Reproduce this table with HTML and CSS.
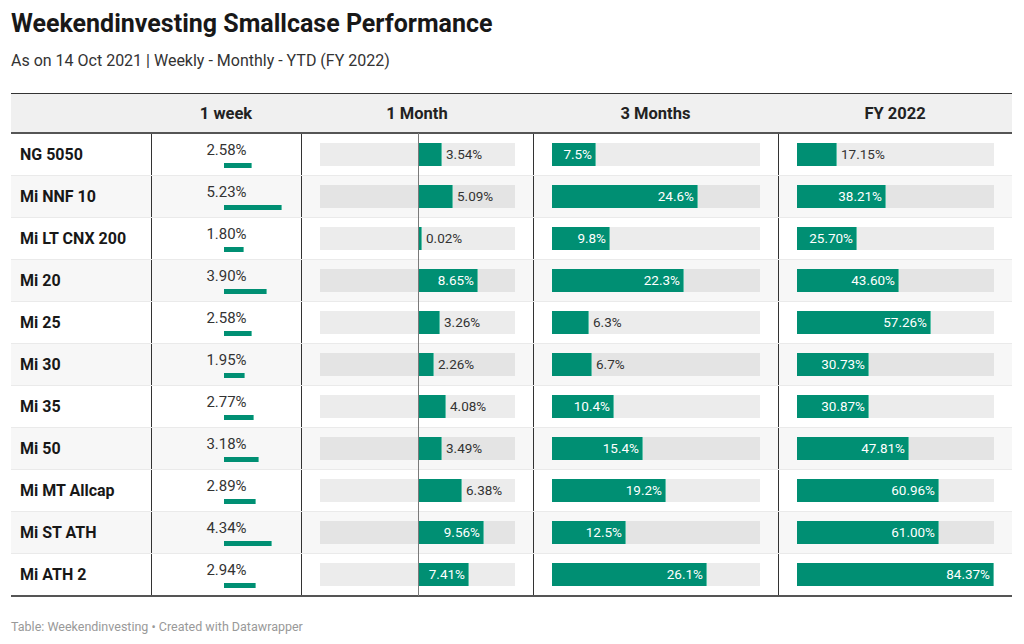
FILE: index.html
```html
<!DOCTYPE html>
<html>
<head>
<meta charset="utf-8">
<link rel="stylesheet" href="styles.css">
</head>
<body>
<div class="chart">
  <h1 class="title">Weekendinvesting Smallcase Performance</h1>
  <p class="subtitle">As on 14 Oct 2021 | Weekly - Monthly - YTD (FY 2022)</p>
  <div class="table">
    <div class="row head">
      <div class="cell"></div>
      <div class="cell">1 week</div>
      <div class="cell">1 Month</div>
      <div class="cell">3 Months</div>
      <div class="cell">FY 2022</div>
    </div>

    <div class="row">
      <div class="cell name">NG 5050</div>
      <div class="cell week"><span>2.58%</span><div class="wbar"><i style="width:28px"></i></div></div>
      <div class="cell month"><div class="track"><div class="neg"></div><div class="bar" style="width:24px"></div><span class="out">3.54%</span></div></div>
      <div class="cell col"><div class="track"><div class="bar" style="width:44px"><span>7.5%</span></div></div></div>
      <div class="cell col"><div class="track"><div class="bar" style="width:40px"></div><span class="out">17.15%</span></div></div>
    </div>

    <div class="row">
      <div class="cell name">Mi NNF 10</div>
      <div class="cell week"><span>5.23%</span><div class="wbar"><i style="width:58px"></i></div></div>
      <div class="cell month"><div class="track"><div class="neg"></div><div class="bar" style="width:35px"></div><span class="out">5.09%</span></div></div>
      <div class="cell col"><div class="track"><div class="bar" style="width:146px"><span>24.6%</span></div></div></div>
      <div class="cell col"><div class="track"><div class="bar" style="width:89px"><span>38.21%</span></div></div></div>
    </div>

    <div class="row">
      <div class="cell name">Mi LT CNX 200</div>
      <div class="cell week"><span>1.80%</span><div class="wbar"><i style="width:20px"></i></div></div>
      <div class="cell month"><div class="track"><div class="neg"></div><div class="bar" style="width:1px"></div><span class="out">0.02%</span></div></div>
      <div class="cell col"><div class="track"><div class="bar" style="width:58px"><span>9.8%</span></div></div></div>
      <div class="cell col"><div class="track"><div class="bar" style="width:60px"><span>25.70%</span></div></div></div>
    </div>

    <div class="row">
      <div class="cell name">Mi 20</div>
      <div class="cell week"><span>3.90%</span><div class="wbar"><i style="width:43px"></i></div></div>
      <div class="cell month"><div class="track"><div class="neg"></div><div class="bar" style="width:60px"><span>8.65%</span></div></div></div>
      <div class="cell col"><div class="track"><div class="bar" style="width:132px"><span>22.3%</span></div></div></div>
      <div class="cell col"><div class="track"><div class="bar" style="width:102px"><span>43.60%</span></div></div></div>
    </div>

    <div class="row">
      <div class="cell name">Mi 25</div>
      <div class="cell week"><span>2.58%</span><div class="wbar"><i style="width:28px"></i></div></div>
      <div class="cell month"><div class="track"><div class="neg"></div><div class="bar" style="width:22px"></div><span class="out">3.26%</span></div></div>
      <div class="cell col"><div class="track"><div class="bar" style="width:37px"></div><span class="out">6.3%</span></div></div>
      <div class="cell col"><div class="track"><div class="bar" style="width:134px"><span>57.26%</span></div></div></div>
    </div>

    <div class="row">
      <div class="cell name">Mi 30</div>
      <div class="cell week"><span>1.95%</span><div class="wbar"><i style="width:21px"></i></div></div>
      <div class="cell month"><div class="track"><div class="neg"></div><div class="bar" style="width:16px"></div><span class="out">2.26%</span></div></div>
      <div class="cell col"><div class="track"><div class="bar" style="width:40px"></div><span class="out">6.7%</span></div></div>
      <div class="cell col"><div class="track"><div class="bar" style="width:72px"><span>30.73%</span></div></div></div>
    </div>

    <div class="row">
      <div class="cell name">Mi 35</div>
      <div class="cell week"><span>2.77%</span><div class="wbar"><i style="width:30px"></i></div></div>
      <div class="cell month"><div class="track"><div class="neg"></div><div class="bar" style="width:28px"></div><span class="out">4.08%</span></div></div>
      <div class="cell col"><div class="track"><div class="bar" style="width:62px"><span>10.4%</span></div></div></div>
      <div class="cell col"><div class="track"><div class="bar" style="width:72px"><span>30.87%</span></div></div></div>
    </div>

    <div class="row">
      <div class="cell name">Mi 50</div>
      <div class="cell week"><span>3.18%</span><div class="wbar"><i style="width:35px"></i></div></div>
      <div class="cell month"><div class="track"><div class="neg"></div><div class="bar" style="width:24px"></div><span class="out">3.49%</span></div></div>
      <div class="cell col"><div class="track"><div class="bar" style="width:91px"><span>15.4%</span></div></div></div>
      <div class="cell col"><div class="track"><div class="bar" style="width:112px"><span>47.81%</span></div></div></div>
    </div>

    <div class="row">
      <div class="cell name">Mi MT Allcap</div>
      <div class="cell week"><span>2.89%</span><div class="wbar"><i style="width:32px"></i></div></div>
      <div class="cell month"><div class="track"><div class="neg"></div><div class="bar" style="width:44px"></div><span class="out">6.38%</span></div></div>
      <div class="cell col"><div class="track"><div class="bar" style="width:114px"><span>19.2%</span></div></div></div>
      <div class="cell col"><div class="track"><div class="bar" style="width:142px"><span>60.96%</span></div></div></div>
    </div>

    <div class="row">
      <div class="cell name">Mi ST ATH</div>
      <div class="cell week"><span>4.34%</span><div class="wbar"><i style="width:48px"></i></div></div>
      <div class="cell month"><div class="track"><div class="neg"></div><div class="bar" style="width:66px"><span>9.56%</span></div></div></div>
      <div class="cell col"><div class="track"><div class="bar" style="width:74px"><span>12.5%</span></div></div></div>
      <div class="cell col"><div class="track"><div class="bar" style="width:142px"><span>61.00%</span></div></div></div>
    </div>

    <div class="row">
      <div class="cell name">Mi ATH 2</div>
      <div class="cell week"><span>2.94%</span><div class="wbar"><i style="width:32px"></i></div></div>
      <div class="cell month"><div class="track"><div class="neg"></div><div class="bar" style="width:51px"><span>7.41%</span></div></div></div>
      <div class="cell col"><div class="track"><div class="bar" style="width:155px"><span>26.1%</span></div></div></div>
      <div class="cell col"><div class="track"><div class="bar" style="width:197px"><span>84.37%</span></div></div></div>
    </div>
  </div>
  <p class="footer">Table: Weekendinvesting • Created with Datawrapper</p>
</div>
</body>
</html>
```

FILE: styles.css
```css
* { box-sizing: border-box; }
html, body { margin: 0; padding: 0; background: #fff; }
body { font-family: Roboto, "Liberation Sans", sans-serif; color: #333; }

.chart { width: 1024px; padding: 0 11px; }

.title {
  margin: 0;
  padding-top: 9px;
  font-size: 25px;
  line-height: 30px;
  font-weight: 700;
  color: #181818;
}
.subtitle {
  margin: 0;
  padding-top: 12px;
  font-size: 16px;
  line-height: 20px;
  color: #333;
}

.table {
  margin-top: 22px;
  width: 1001px;
  border-top: 1px solid #333;
  border-bottom: 2px solid #555;
}
.row {
  display: grid;
  grid-template-columns: 140px 150px 232px 245px 234px;
  height: 42px;
  border-bottom: 1px solid #eaeaea;
}
.row:nth-child(odd) { background: #f7f7f7; }
.row:last-child { border-bottom: none; height: 41px; }
.row.head {
  height: 40px;
  background: #f0f0f0;
  border-bottom: 2px solid #555;
}
.head .cell {
  font-size: 16.5px;
  font-weight: 700;
  color: #222;
  display: flex;
  align-items: center;
  justify-content: center;
  border-left: none;
}

.cell { position: relative; border-left: 1px solid #333; }
.cell.name {
  border-left: none;
  padding-left: 9px;
  display: flex;
  align-items: center;
  font-size: 16px;
  font-weight: 700;
  color: #181818;
}

.cell.week {
  display: flex;
  flex-direction: column;
  align-items: center;
  justify-content: center;
  padding-top: 1px;
}
.week span { font-size: 15px; line-height: 17px; color: #333; }
.wbar { width: 100%; padding-left: 72px; margin-top: 4px; height: 5px; }
.wbar i { display: block; height: 5px; background: #008f73; border-right: 1px solid #5cc1aa; }

.cell.month, .cell.col {
  display: flex;
  align-items: center;
  padding: 0 18px 0 18px;
}
.cell.month::after {
  content: "";
  position: absolute;
  left: 116px;
  top: -1px;
  bottom: -1px;
  width: 1px;
  background: #7a7a7a;
}
.track {
  flex: 1;
  height: 23px;
  background: rgba(0, 0, 0, 0.075);
  display: flex;
  align-items: stretch;
}
.neg { width: 98px; flex: none; }
.bar {
  flex: none;
  background: #008f73;
  border-right: 1px solid #5cc1aa;
  display: flex;
  align-items: center;
  justify-content: flex-end;
  padding-right: 3px;
}
.bar span, .out {
  font-size: 13.5px;
  line-height: 23px;
  white-space: nowrap;
}
.bar span { color: #fff; }
.out { color: #333; padding-left: 4px; }

.footer {
  margin: 0;
  padding-top: 22px;
  font-size: 12.5px;
  line-height: 16px;
  color: #999;
}
```
